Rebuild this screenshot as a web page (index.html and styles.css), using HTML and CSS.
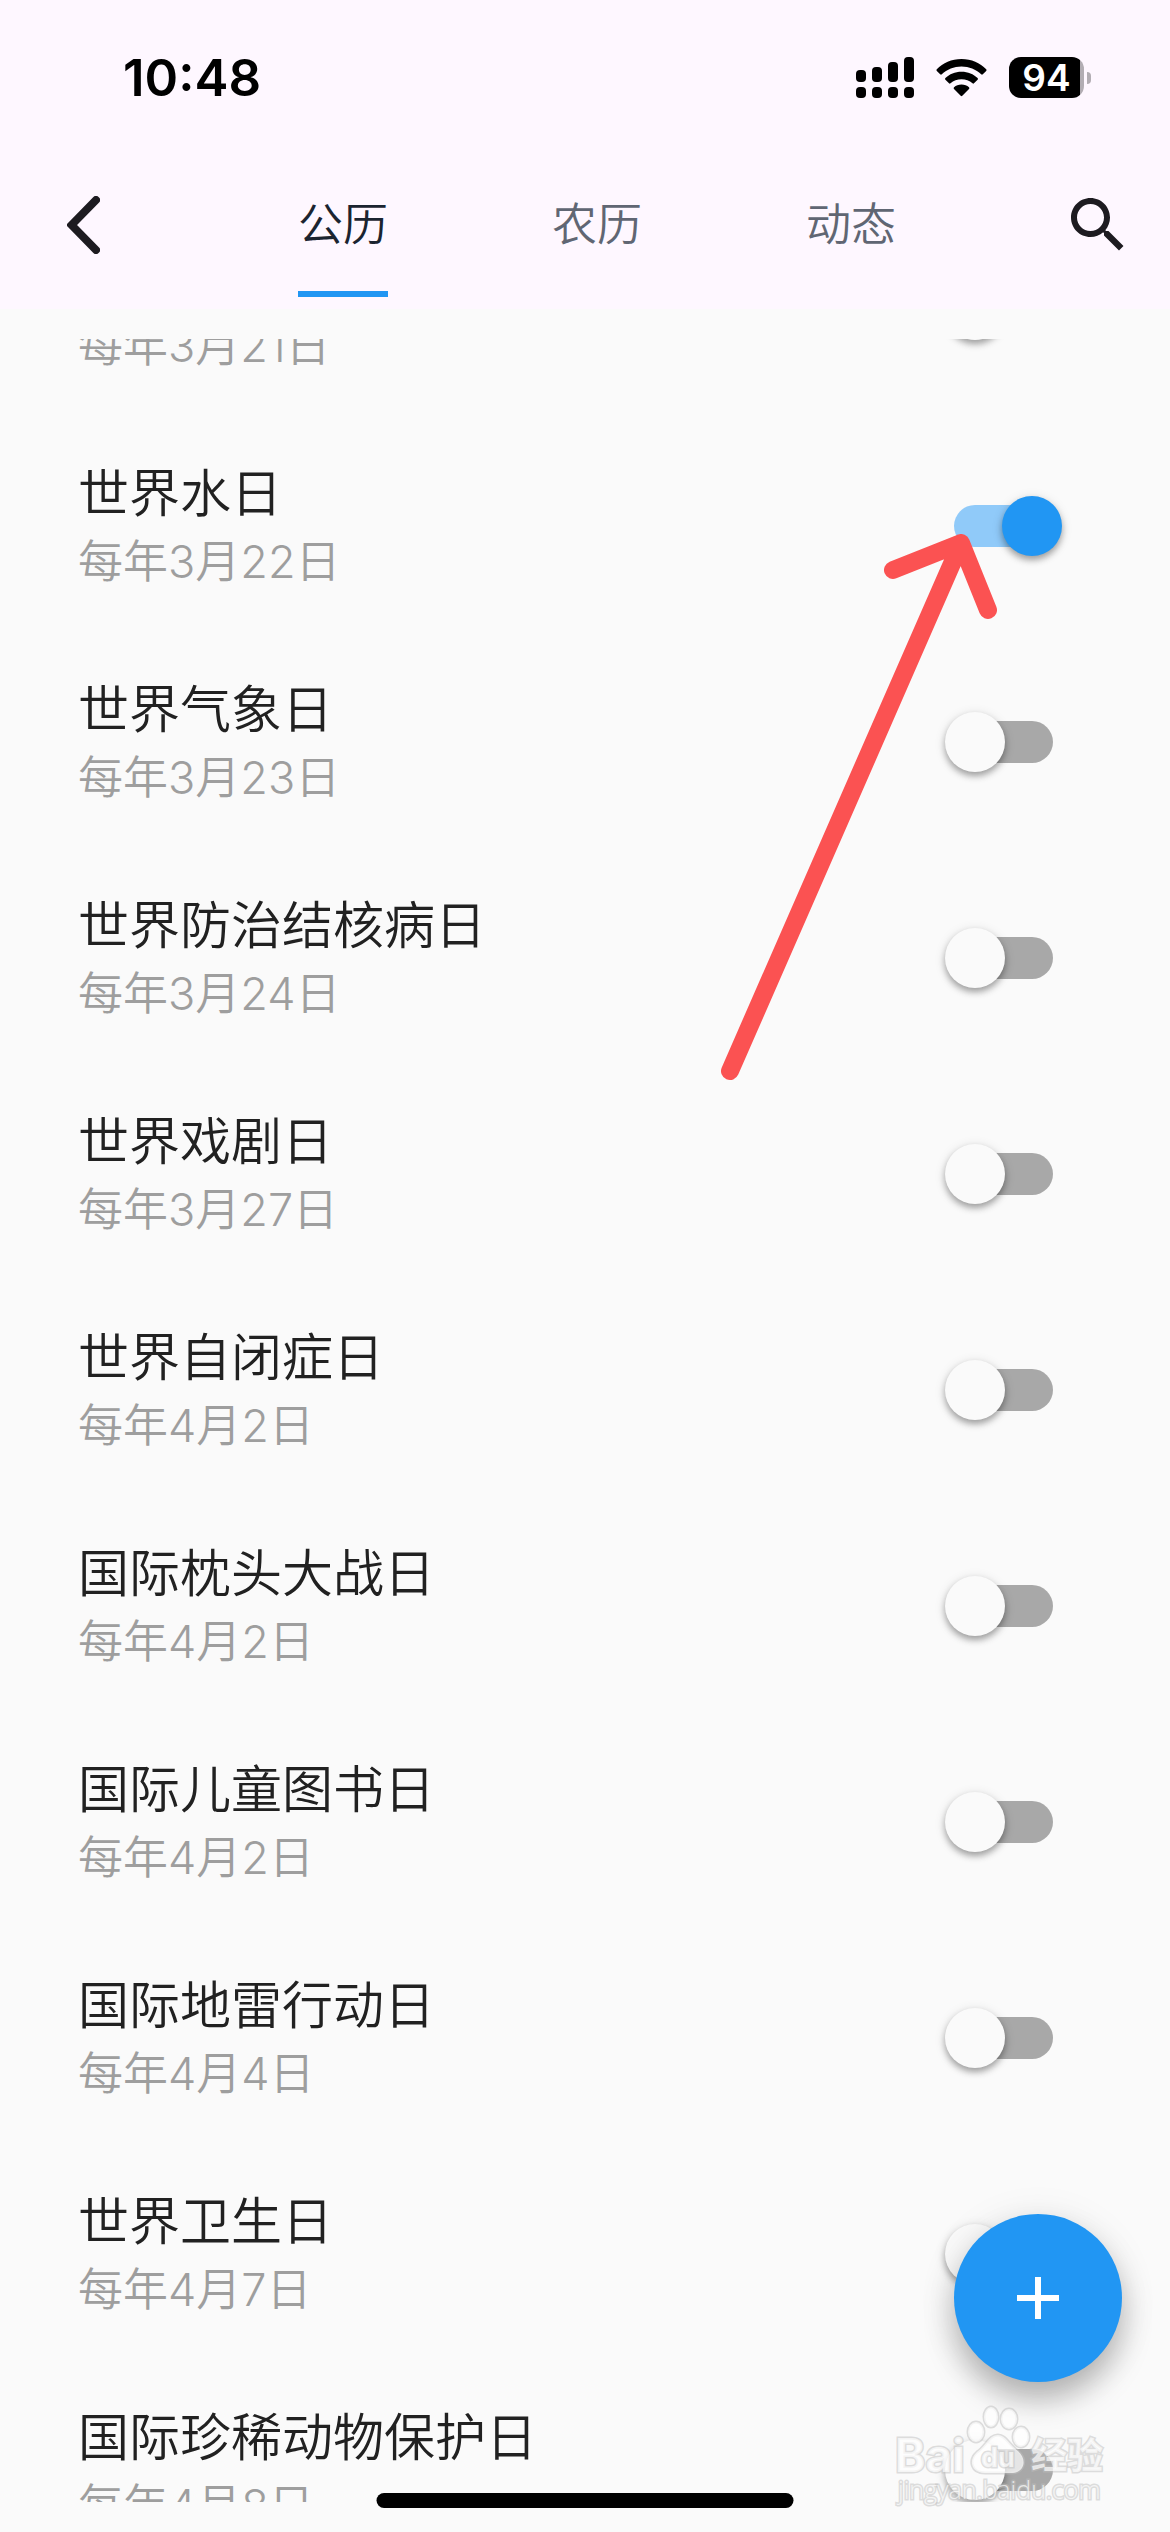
FILE: index.html
```html
<!DOCTYPE html>
<html lang="zh-CN">
<head>
  <meta charset="UTF-8" />
  <meta name="viewport" content="width=device-width, initial-scale=1" />
  <title>公历纪念日</title>
  <link rel="stylesheet" href="styles.css">
</head>
<body>

  <header class="header">
    <div class="status-bar">
      <span class="time">10:48</span>
      <div class="status-icons">
        <svg class="icon-signal" viewBox="0 0 58 41">
          <rect x="0" y="13" width="10" height="12" rx="4" />
          <rect x="16" y="10" width="10" height="15" rx="4" />
          <rect x="32" y="5" width="10" height="20" rx="4" />
          <rect x="48" y="0" width="10" height="25" rx="4" />
          <rect x="0" y="30" width="10" height="11" rx="4" />
          <rect x="16" y="30" width="10" height="11" rx="4" />
          <rect x="32" y="30" width="10" height="11" rx="4" />
          <rect x="48" y="30" width="10" height="11" rx="4" />
        </svg>
        <svg class="icon-wifi" viewBox="0 0 51 38">
          <path d="M25.500 0C35.500 0 44 4 50.200 10.200Q51 11 50.200 11.900L46.800 15.300Q46 16 45.200 15.300C40 10.300 33 7.500 25.500 7.500S11 10.300 5.800 15.300Q5 16 4.200 15.300L.8 11.900Q0 11 .8 10.200C7 4 15.500 0 25.500 0Z" />
          <path d="M25.500 12.800C32 12.800 37.500 15.200 41.600 19.100Q42.400 20 41.600 20.800L38 24.300Q37.300 25 36.500 24.300C33.500 21.600 29.700 20.200 25.500 20.200S17.500 21.600 14.500 24.300Q13.700 25 13 24.300L9.400 20.800Q8.600 20 9.400 19.100C13.500 15.200 19 12.800 25.500 12.800Z" />
          <path d="M25.500 25.600C28.500 25.600 31 26.600 33 28.300Q33.800 29.200 33 30L26.300 36.800Q25.500 37.600 24.700 36.800L18 30Q17.200 29.200 18 28.300C20 26.600 22.500 25.600 25.500 25.600Z" />
        </svg>
        <div class="battery"><span class="battery-level">94</span></div>
      </div>
    </div>

    <nav class="nav-bar">
      <button class="icon-button" aria-label="返回">
        <svg class="icon-back" viewBox="0 0 33 58"><path d="M29 4L4.500 29L29 54" /></svg>
      </button>
      <div class="tabs">
        <button class="tab active">公历</button>
        <button class="tab">农历</button>
        <button class="tab">动态</button>
      </div>
      <button class="icon-button" aria-label="搜索">
        <svg class="icon-search" viewBox="0 0 24 24"><path d="M15.500 14h-.79l-.28-.27C15.410 12.590 16 11.110 16 9.500 16 5.910 13.090 3 9.500 3S3 5.910 3 9.500 5.910 16 9.500 16c1.610 0 3.090-.59 4.230-1.570l.27.28v.79l5 4.990L20.490 19l-4.990-5zm-6 0C7.010 14 5 11.990 5 9.500S7.010 5 9.500 5 14 7.010 14 9.500 11.990 14 9.500 14z" /></svg>
      </button>
    </nav>
  </header>

  <main class="list-view">
    <div class="list">
      <label class="row"><span class="row-text"><span class="title">国际森林日</span><span class="date">每年3月21日</span></span><input type="checkbox" class="switch"></label>
      <label class="row"><span class="row-text"><span class="title">世界水日</span><span class="date">每年3月22日</span></span><input type="checkbox" class="switch" checked></label>
      <label class="row"><span class="row-text"><span class="title">世界气象日</span><span class="date">每年3月23日</span></span><input type="checkbox" class="switch"></label>
      <label class="row"><span class="row-text"><span class="title">世界防治结核病日</span><span class="date">每年3月24日</span></span><input type="checkbox" class="switch"></label>
      <label class="row"><span class="row-text"><span class="title">世界戏剧日</span><span class="date">每年3月27日</span></span><input type="checkbox" class="switch"></label>
      <label class="row"><span class="row-text"><span class="title">世界自闭症日</span><span class="date">每年4月2日</span></span><input type="checkbox" class="switch"></label>
      <label class="row"><span class="row-text"><span class="title">国际枕头大战日</span><span class="date">每年4月2日</span></span><input type="checkbox" class="switch"></label>
      <label class="row"><span class="row-text"><span class="title">国际儿童图书日</span><span class="date">每年4月2日</span></span><input type="checkbox" class="switch"></label>
      <label class="row"><span class="row-text"><span class="title">国际地雷行动日</span><span class="date">每年4月4日</span></span><input type="checkbox" class="switch"></label>
      <label class="row"><span class="row-text"><span class="title">世界卫生日</span><span class="date">每年4月7日</span></span><input type="checkbox" class="switch"></label>
      <label class="row"><span class="row-text"><span class="title">国际珍稀动物保护日</span><span class="date">每年4月8日</span></span><input type="checkbox" class="switch"></label>
    </div>
  </main>

  <button class="fab" aria-label="添加">
    <svg class="icon-add" viewBox="0 0 42 42"><path d="M21 0V42M0 21H42" /></svg>
  </button>

  <svg class="arrow" viewBox="0 0 280 560"><path d="M18 539L249 11M181 38L249 11L276 78" /></svg>

  <svg class="watermark" viewBox="0 0 220 110">
    <g class="mark-shape">
      <ellipse cx="86" cy="32" rx="8" ry="10" />
      <ellipse cx="101" cy="17" rx="7" ry="10" />
      <ellipse cx="119" cy="19" rx="8" ry="10" />
      <ellipse cx="131" cy="37" rx="8" ry="10" />
      <path d="M108 35C116 35 119 45 128 51C138 60 134 73 121 73C114 73 102 73 95 73C81 73 78 60 87 52C96 46 99 35 108 35Z" />
    </g>
    <text class="mark-name" x="5" y="72">Bai</text>
    <text class="mark-du" x="91" y="67">du</text>
    <text class="mark-cn" x="141" y="69">经验</text>
    <text class="mark-url" x="8" y="99">jingyan.baidu.com</text>
  </svg>

  <div class="home-indicator"></div>

</body>
</html>
```
FILE: styles.css
```css
* {
  box-sizing: border-box;
}

body {
  margin: 0;
  height: 100vh;
  display: flex;
  flex-direction: column;
  position: relative;
  overflow: hidden;
  background: #fafafa;
  color: #212121;
  font-family: Inter, "Noto Sans CJK SC", sans-serif;
  font-weight: 350;
}

button {
  font-family: inherit;
  font-weight: inherit;
  border: none;
  padding: 0;
  background: none;
  cursor: pointer;
}

.header {
  background: #fef7ff;
}

.status-bar {
  height: 141px;
  padding: 14px 79px 0 123px;
  display: flex;
  align-items: center;
  justify-content: space-between;
  color: #000;
}

.time {
  font-size: 51px;
  font-weight: 600;
}

.status-icons {
  display: flex;
  align-items: center;
  gap: 22px;
}

.icon-signal {
  width: 58px;
  height: 41px;
}

.icon-wifi {
  width: 51px;
  height: 38px;
}

.battery {
  display: flex;
  align-items: center;
}

.battery-level {
  width: 75px;
  height: 41px;
  border-radius: 12px;
  background: linear-gradient(to right, #000 71px, #b2adb3 71px);
  color: #fff;
  font-size: 37px;
  font-weight: 600;
  line-height: 41px;
  text-align: center;
}

.battery::after {
  content: "";
  width: 4px;
  height: 12px;
  margin-left: 3px;
  border-radius: 0 4px 4px 0;
  background: #b2adb3;
}

.nav-bar {
  height: 168px;
  display: grid;
  grid-template-columns: 216px 1fr 192px;
}

.icon-button {
  display: flex;
  align-items: center;
}

.icon-button:first-child {
  padding-left: 67px;
}

.icon-button:last-child {
  padding-left: 84px;
}

.icon-back {
  width: 33px;
  height: 58px;
  fill: none;
  stroke: #1d1b20;
  stroke-width: 8;
  stroke-linecap: round;
}

.icon-search {
  width: 72px;
  height: 72px;
  fill: #1d1b20;
}

.tabs {
  display: flex;
  justify-content: space-around;
  align-items: flex-start;
}

.tab {
  height: 156px;
  padding-top: 10px;
  border-bottom: 6px solid transparent;
  color: #606673;
  font-size: 45px;
}

.tab.active {
  color: #1b2430;
  border-bottom-color: #2196f3;
}

.list-view {
  flex: 1;
  min-height: 0;
  margin: 30px 0;
  overflow: hidden;
}

/* scrolled part way into the first row */
.list {
  margin-top: -137px;
}

.row {
  height: 216px;
  padding: 0 117px 0 78px;
  display: flex;
  align-items: center;
  justify-content: space-between;
}

.row-text {
  display: flex;
  flex-direction: column;
  padding-top: 4px;
}

.title {
  font-size: 51px;
  line-height: 68px;
}

.date {
  font-size: 45px;
  line-height: 68px;
  color: #9e9e9e;
}

.switch {
  appearance: none;
  position: relative;
  width: 99px;
  height: 42px;
  margin: 0;
  border-radius: 21px;
  background: #a8a8a8;
}

.switch::before {
  content: "";
  position: absolute;
  top: -9px;
  left: -9px;
  width: 60px;
  height: 60px;
  border-radius: 50%;
  background: #fafafa;
  box-shadow: 0 4px 6px rgba(0, 0, 0, 0.3), 0 2px 12px rgba(0, 0, 0, 0.12);
}

.switch:checked {
  background: #90caf9;
}

.switch:checked::before {
  left: 48px;
  background: #2196f3;
}

.fab {
  position: absolute;
  right: 48px;
  bottom: 150px;
  width: 168px;
  height: 168px;
  border-radius: 50%;
  display: flex;
  align-items: center;
  justify-content: center;
  background: #2196f3;
  box-shadow: 0 18px 30px rgba(0, 0, 0, 0.26), 0 4px 40px rgba(0, 0, 0, 0.08);
}

.icon-add {
  width: 42px;
  height: 42px;
  stroke: #fff;
  stroke-width: 6;
}

.arrow {
  position: absolute;
  top: 532px;
  right: 178px;
  width: 280px;
  height: 560px;
  overflow: visible;
  fill: none;
  stroke: #fb5252;
  stroke-width: 18;
  stroke-linecap: round;
  stroke-linejoin: round;
  pointer-events: none;
}

.watermark {
  position: absolute;
  right: 60px;
  bottom: 22px;
  width: 220px;
  height: 110px;
  fill: rgba(255, 255, 255, 0.7);
  stroke: rgba(190, 190, 190, 0.5);
  stroke-width: 3;
  paint-order: stroke;
  pointer-events: none;
}

.mark-name {
  font-size: 46px;
  font-weight: 700;
}

.mark-du {
  font-size: 27px;
  font-weight: 700;
}

.mark-cn {
  font-size: 36px;
  font-weight: 700;
}

.mark-url {
  font-family: "Open Sans", sans-serif;
  font-size: 25px;
}

.home-indicator {
  position: absolute;
  left: 50%;
  bottom: 24px;
  width: 417px;
  height: 15px;
  border-radius: 8px;
  background: #000;
  transform: translateX(-50%);
}
```
